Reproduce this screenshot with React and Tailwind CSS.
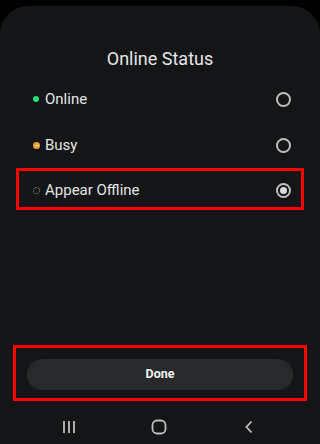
import React, { useState } from 'react';

const options = [
  { id: 'online', label: 'Online' },
  { id: 'busy', label: 'Busy' },
  { id: 'offline', label: 'Appear Offline' },
];

const StatusDot = ({ id }) => {
  if (id === 'online') {
    return <span className="block w-[6px] h-[6px] rounded-full bg-[#1ee07a]" />;
  }
  if (id === 'busy') {
    return (
      <span className="flex items-center justify-center w-[7px] h-[7px] rounded-full bg-[#f5a030]">
        <span className="block w-[4px] h-[1px] bg-[#fde2b8]" />
      </span>
    );
  }
  return <span className="block w-[7px] h-[7px] rounded-full border border-dotted border-[#8a8a8a]" />;
};

const Radio = ({ checked }) => (
  <span className="flex items-center justify-center w-[15px] h-[15px] rounded-full border-2 border-[#bdbdbd]">
    {checked && <span className="block w-[7px] h-[7px] rounded-full bg-[#d9d9d9]" />}
  </span>
);

const App = () => {
  const [status, setStatus] = useState('offline');

  return (
    <div className="h-[444px] w-[320px] bg-black pt-[6px] overflow-hidden" style={{ fontFamily: 'Roboto, "Open Sans", sans-serif' }}>
      <div className="h-[438px] bg-[#141517] rounded-t-[28px] flex flex-col">
        <div className="pt-[42px] h-[70px] text-center text-[18px] leading-[22px] text-[#e6e6e6]">
          Online Status
        </div>

        <div className="flex flex-col">
          {options.map((opt) => {
            const selected = opt.id === 'offline';
            return (
              <button
                key={opt.id}
                onClick={() => setStatus(opt.id)}
                className={
                  selected
                    ? 'mx-[16px] h-[42px] border-[3px] border-[#ff0000] flex items-center pl-[14px] pr-[10px] pt-[2px]'
                    : 'mx-[16px] h-[46px] border-[3px] border-transparent flex items-center pl-[14px] pr-[10px]'
                }
              >
                <span className="w-[12px] flex items-center justify-start">
                  <StatusDot id={opt.id} />
                </span>
                <span className="flex-1 text-left text-[15px] text-[#e4e4e4]">{opt.label}</span>
                <Radio checked={status === opt.id} />
              </button>
            );
          })}
        </div>

        <div className="flex-1" />

        <div className="mx-[13px] h-[56px] border-[3px] border-[#ff0000] flex items-center px-[11px] pt-[2px]">
          <button className="w-full h-[31px] rounded-full bg-[#28292a] text-[12.5px] font-bold text-[#f0f0f0]">
            Done
          </button>
        </div>

        <div className="h-[43px] flex items-center pl-[24px] pt-[8px]">
          <span className="w-[90px] flex justify-center">
            <svg width="16" height="14" viewBox="0 0 16 14" fill="none" stroke="#bdbdbd" strokeWidth="1.8">
              <path d="M3 1v12M8 1v12M13 1v12" />
            </svg>
          </span>
          <span className="w-[90px] flex justify-center">
            <svg width="16" height="16" viewBox="0 0 16 16" fill="none" stroke="#bdbdbd" strokeWidth="1.8">
              <rect x="1.5" y="1.5" width="13" height="13" rx="4.5" />
            </svg>
          </span>
          <span className="w-[90px] flex justify-center">
            <svg width="10" height="14" viewBox="0 0 10 14" fill="none" stroke="#bdbdbd" strokeWidth="1.8">
              <path d="M7.5 1.5L2.5 7l5 5.5" />
            </svg>
          </span>
        </div>
      </div>
    </div>
  );
};

export default App;
